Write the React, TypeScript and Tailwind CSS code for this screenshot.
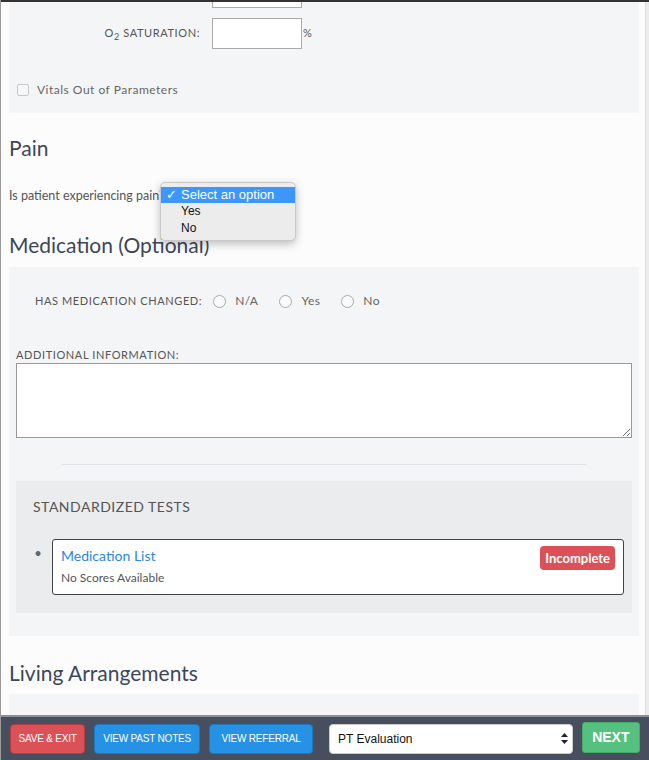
import React from 'react';

const font = { fontFamily: 'Lato, "Liberation Sans", sans-serif' };

const Radio: React.FC<{ label: string }> = ({ label }) => (
  <label className="flex items-center gap-[9px] text-[12px] text-[#666] tracking-[0.4px]">
    <span className="inline-block w-[13px] h-[13px] rounded-full border border-[#aaa] bg-[#fafafa]" />
    {label}
  </label>
);

const App: React.FC = () => {
  return (
    <div
      className="relative w-[649px] h-[760px] overflow-hidden bg-[#fcfcfc] border-l border-[#9a9a9a]"
      style={font}
    >
      <div className="h-[2px] bg-[#333]" />

      <div className="flex">
        <div className="flex-1 pl-[8px] pr-[6px]">
          {/* Vitals panel (scrolled) */}
          <div className="bg-[#f4f5f7] h-[111px]">
            <div className="flex">
              <div className="w-[191px]" />
              <div className="ml-[12px] w-[90px] h-[6px] bg-white border border-t-0 border-[#aaa]" />
            </div>
            <div className="flex items-center mt-[10px]">
              <div className="w-[191px] text-right text-[11px] text-[#555] tracking-[0.6px]">
                O<sub className="text-[9px]">2</sub> SATURATION:
              </div>
              <div className="ml-[12px] w-[90px] h-[31px] bg-white border border-[#aaa]" />
              <span className="text-[11px] text-[#555] ml-[1px]">%</span>
            </div>
            <div className="flex items-center mt-[32px] ml-[8px] gap-[8px]">
              <span className="inline-block w-[12px] h-[12px] border border-[#c8c8c8] bg-[#f7f7f7] rounded-[2px]" />
              <span className="text-[12px] text-[#666] tracking-[0.5px]">Vitals Out of Parameters</span>
            </div>
          </div>

          {/* Pain */}
          <h2 className="text-[21px] text-[#3c4759] mt-[23px] leading-[24px]">Pain</h2>
          <div className="flex items-center mt-[26px] h-[20px]">
            <span className="text-[12.5px] text-[#555]">Is patient experiencing pain?</span>
            <div className="ml-[6px] w-[110px] h-[20px] border-t border-[#6b7fa0]" />
          </div>

          {/* Medication */}
          <h2 className="text-[21px] text-[#3c4759] mt-[27px] leading-[24px]">Medication (Optional)</h2>
          <div className="bg-[#f4f5f7] mt-[10px] px-[7px] pb-[23px]">
            <div className="flex items-center pt-[25px] pl-[19px]">
              <span className="text-[11px] text-[#555] tracking-[0.6px] mr-[11px]">HAS MEDICATION CHANGED:</span>
              <div className="flex items-center gap-[21px]">
                <Radio label="N/A" />
                <Radio label="Yes" />
                <Radio label="No" />
              </div>
            </div>
            <div className="text-[11px] text-[#555] tracking-[0.6px] mt-[38px] leading-[14px]">ADDITIONAL INFORMATION:</div>
            <textarea className="block w-full h-[75px] mt-[1px] bg-white border border-[#999] resize-y" />
            <div className="mx-[46px] mt-[26px] border-t border-[#e2e3e6]" />
            <div className="bg-[#ebecee] mt-[16px] px-[8px] pt-[17px] pb-[18px]">
              <div className="text-[14px] text-[#555] tracking-[0.5px] pl-[9px] leading-[18px]">STANDARDIZED TESTS</div>
              <div className="flex items-start mt-[23px]">
                <span className="w-[28px] text-center text-[#666] text-[13px] leading-[28px]">•</span>
                <div className="flex-1 bg-white border border-[#3d4450] rounded-[3px] pl-[8px] pr-[8px] pt-[6px] pb-[7px] flex justify-between">
                  <div>
                    <div className="text-[14px] text-[#2b87de] leading-[20px]">Medication List</div>
                    <div className="text-[12px] text-[#555] mt-[3px]">No Scores Available</div>
                  </div>
                  <span className="self-start bg-[#dc5157] text-white text-[13px] font-bold rounded-[4px] px-[5px] h-[24px] leading-[24px]">
                    Incomplete
                  </span>
                </div>
              </div>
            </div>
          </div>

          {/* Living */}
          <h2 className="text-[21px] text-[#3c4759] mt-[25px] leading-[24px]">Living Arrangements</h2>
          <div className="bg-[#f4f5f7] mt-[9px] h-[60px]" />
        </div>
        <div className="w-[4px] bg-[#ececec] border-l border-[#dedede]" />
      </div>

      {/* Dropdown menu over the select */}
      <div
        className="absolute left-[159px] top-[182px] w-[136px] h-[59px] bg-[#ececec] rounded-[5px] border border-[#c9c9c9] shadow-[0_3px_8px_rgba(0,0,0,0.25)] pt-[4px]"
        style={{ fontFamily: '"Liberation Sans", Arial, sans-serif' }}
      >
        <div className="flex items-center h-[16px] bg-[#3d97fb] text-white text-[13px]">
          <span className="w-[20px] text-center">✓</span>
          <span>Select an option</span>
        </div>
        <div className="h-[17px] leading-[17px] pl-[20px] text-[12px] text-[#111]">Yes</div>
        <div className="h-[17px] leading-[17px] pl-[20px] text-[12px] text-[#111]">No</div>
      </div>

      {/* Footer bar */}
      <div
        className="absolute left-0 right-0 bottom-0 h-[45px] bg-[#474f5f] border-t-[2px] border-[#8a8f99] flex items-center px-[9px] gap-[9px]"
        style={{ fontFamily: '"Liberation Sans", Arial, sans-serif' }}
      >
        <button className="h-[30px] w-[76px] rounded-[4px] bg-[#dc5158] border border-[#b43a40] text-white text-[10px] tracking-[-0.2px]">
          SAVE &amp; EXIT
        </button>
        <button className="h-[30px] w-[107px] rounded-[4px] bg-[#2592e5] border border-[#1d78c0] text-white text-[10px] tracking-[-0.2px]">
          VIEW PAST NOTES
        </button>
        <button className="h-[30px] w-[105px] rounded-[4px] bg-[#2592e5] border border-[#1d78c0] text-white text-[10px] tracking-[-0.2px]">
          VIEW REFERRAL
        </button>
        <div className="ml-[7px] h-[30px] w-[246px] rounded-[4px] bg-white border border-[#ccc] flex items-center justify-between pl-[8px] pr-[4px]">
          <span className="text-[12px] text-[#111]">PT Evaluation</span>
          <svg width="7" height="11" viewBox="0 0 7 11">
            <path d="M3.5 0 L7 4 H0 Z" fill="#222" />
            <path d="M3.5 11 L7 7 H0 Z" fill="#222" />
          </svg>
        </div>
        <button className="-mt-[2px] h-[31px] w-[59px] rounded-[3px] bg-[#54c17e] border border-[#47a96c] text-white text-[14px] font-bold">
          NEXT
        </button>
      </div>
    </div>
  );
};

export default App;
